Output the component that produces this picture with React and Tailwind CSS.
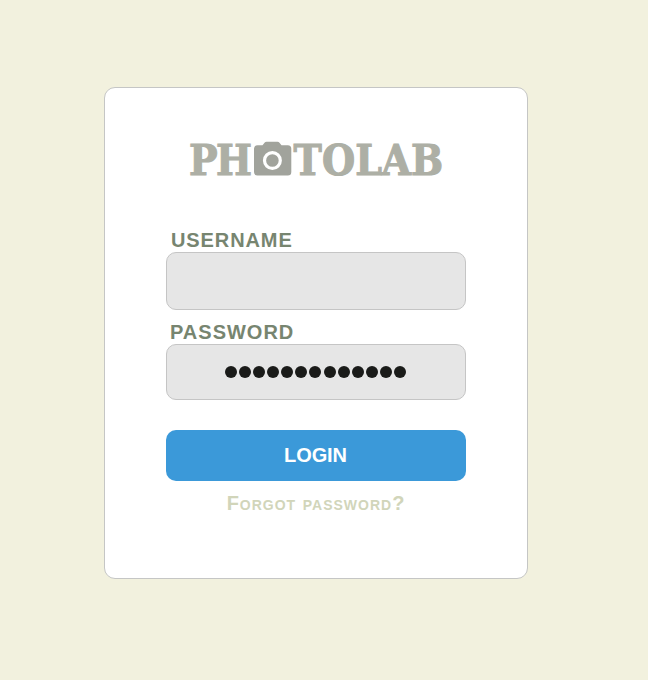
const PASSWORD_LENGTH = 13;

function Logo() {
  return (
    <svg
      className="block h-[76px] w-[292px]"
      viewBox="170 122 292 76"
      role="img"
      aria-label="Photolab"
    >
      <g
        fill="#adafa5"
        stroke="#adafa5"
        strokeWidth="1.1"
        fontFamily="'DejaVu Serif', serif"
        fontWeight="700"
        fontSize="42.3"
        transform="scale(0.9 1)"
      >
        <text x="210 240" y="174.7">PH</text>
        <text x="326.1 357.8 394.8 423.8 456.8" y="174.7">TOLAB</text>
      </g>
      <path
        fill="#a1a39c"
        d="M257.5 145.2H262.5L264.5 142.8Q265.3 141.8 266.5 141.8H277.5Q278.7 141.8 279.5 142.8L281.5 145.2H287.8Q291.3 145.2 291.3 148.7V172Q291.3 175.5 287.8 175.5H257.5Q254 175.5 254 172V148.7Q254 145.2 257.5 145.2Z"
      />
      <circle cx="272.4" cy="160.5" r="7.9" fill="#a1a39c" stroke="#fff" strokeWidth="3.2" />
    </svg>
  );
}

function Label({ children, htmlFor, className }) {
  return (
    <label
      htmlFor={htmlFor}
      className={`block h-[24px] text-[20px] leading-[24px] font-bold text-[#778570] ${className}`}
    >
      {children}
    </label>
  );
}

export default function App() {
  return (
    <main className="flex h-[680px] w-[648px] items-start bg-[#f2f1de] pt-[87px] pl-[104px] font-['Liberation_Sans',Arial,sans-serif]">
      <form className="flex h-[492px] w-[424px] flex-col rounded-[11px] border border-[#c5c6c5] bg-white px-[61px] pt-[34px]">
        <div className="flex justify-center">
          <Logo />
        </div>
        <Label htmlFor="username" className="mt-[30px] pl-[5px] tracking-[0.9px]">USERNAME</Label>
        <input
          id="username"
          className="block h-[58px] w-[300px] rounded-[10px] border border-[#c5c5c5] bg-[#e6e6e6] px-3 text-center outline-none"
        />
        <Label className="mt-[10px] pl-[4px] tracking-[1px]">PASSWORD</Label>
        <div className="flex h-[56px] w-[300px] items-center justify-center gap-[2px] rounded-[10px] border border-[#c5c5c5] bg-[#e6e6e6] pr-[1px]">
          {Array.from({ length: PASSWORD_LENGTH }, (_, i) => (
            <span
              key={i}
              className={`h-[12px] w-[12px] rounded-full bg-[#1a1b19] ${i === 7 ? "ml-[1px]" : ""}`}
            />
          ))}
        </div>
        <button
          type="button"
          className="mt-[30px] h-[51px] w-[300px] rounded-[10px] bg-[#3b99d9] pr-[1px] pb-[2px] text-[20px] leading-[24px] font-bold tracking-[-0.1px] text-white"
        >
          LOGIN
        </button>
        <a className="mt-[10px] text-center text-[20px] leading-[24px] font-bold tracking-[1px] text-[#d1d5ba] [font-variant:small-caps]">
          Forgot password?
        </a>
      </form>
    </main>
  );
}
